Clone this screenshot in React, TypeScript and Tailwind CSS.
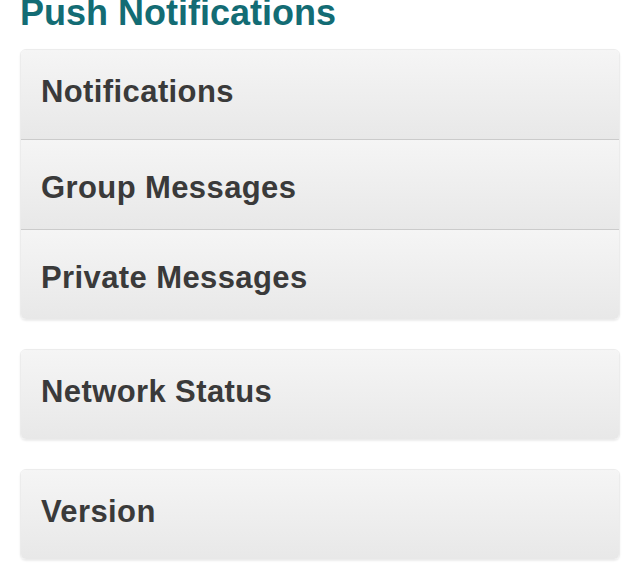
const groups = [
  ["Notifications", "Group Messages", "Private Messages"],
  ["Network Status"],
  ["Version"],
]

function Row({ label, first, last }: { label: string; first: boolean; last: boolean }) {
  return (
    <div
      className={
        "flex items-center px-5 bg-gradient-to-b from-[#f5f5f5] to-[#e8e8e8] " +
        (first ? "pb-[7px] " : "pt-[5px] ") +
        (last ? "h-[89px]" : "h-[90px] border-b border-[#cbcbcb]")
      }
    >
      <span className="text-[31px] font-bold tracking-[0.4px] text-[#3a3a3a] leading-none">{label}</span>
    </div>
  )
}

export default function App() {
  return (
    <div
      className="w-[640px] h-[564px] bg-white px-5 overflow-hidden"
      style={{ fontFamily: '"Liberation Sans", Arial, sans-serif' }}
    >
      <h1 className="-mt-[5px] text-[36px] font-bold leading-none text-[#136c74]">Push Notifications</h1>
      <div className="mt-[18px] flex flex-col gap-[29px]">
        {groups.map((rows, i) => (
          <div
            key={i}
            className="rounded-[6px] overflow-hidden border border-[#ececec] shadow-[0_1px_2px_rgba(0,0,0,0.08)]"
          >
            {rows.map((r, j) => (
              <Row key={r} label={r} first={j === 0} last={j === rows.length - 1} />
            ))}
          </div>
        ))}
      </div>
    </div>
  )
}
